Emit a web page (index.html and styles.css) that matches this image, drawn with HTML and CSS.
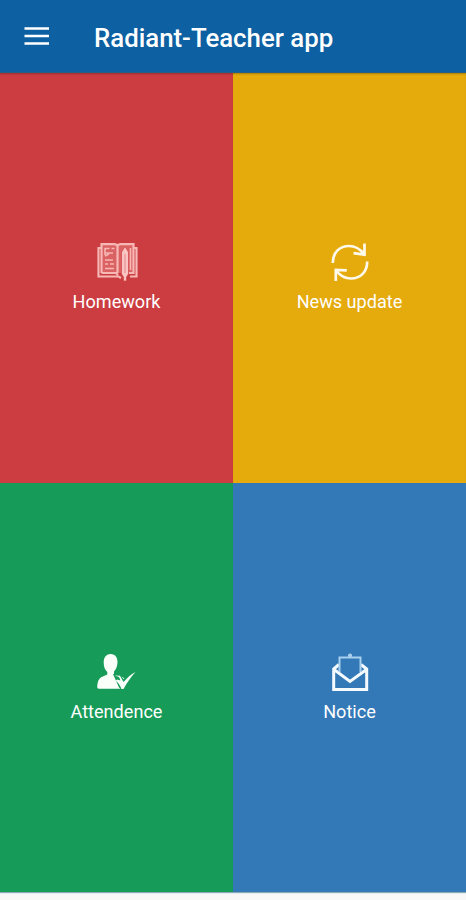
FILE: index.html
```html
<!DOCTYPE html>
<html lang="en">
<head>
<meta charset="utf-8">
<title>Radiant-Teacher app</title>
<link rel="stylesheet" href="styles.css">
</head>
<body>
<header class="bar">
  <svg class="menu" viewBox="0 0 26 20"><path d="M.5 2.400h24.500M.5 10h24.500M.5 17.500h24.500"/></svg>
  <h1 class="title">Radiant-Teacher app</h1>
</header>
<main class="tiles">
  <a class="tile homework">
    <svg class="icon" viewBox="0 0 60 55">
      <rect class="tint" x="14" y="9" width="33" height="29"/>
      <path class="soft" stroke-width="2.200" d="M14 13h-2.500v28.500h20L34 43M43 41.500h6.500V13H47M14.500 38V9.200H27q3 0 3.500 2q.5-2 3.500-2h12.500V38H42M14.500 38H29l2 2M30.500 11v27"/>
      <path class="soft" stroke-width="1.600" d="M17.500 13.500h5M24.500 13.500h3M18 18h8M18 21l4-2M18 25h8M18 29h3M23 29h4M18 33.500h9M18 13v7M43.500 13v22"/>
      <path class="pencil" d="M38 11.500l3.500 5.500v22l-2 3v4h-3v-4l-2-3V17z"/>
      <path class="lead" d="M38 19v19"/>
    </svg>
    <span class="label">Homework</span>
  </a>
  <a class="tile news">
    <svg class="icon" viewBox="0 0 60 55">
      <path class="line" stroke-width="2.700" d="M12.800 28C12.800 17 20 11 29 11c6.500 0 11.500 3.500 15 8M44.500 8.500v11.200l-11-1.500M47.200 26.500C47.200 37.500 40 43.500 31 43.500c-6.500 0-11.500-3.500-15-8M15.800 46V34.800l11 .5"/>
    </svg>
    <span class="label">News update</span>
  </a>
  <a class="tile attendance">
    <svg class="icon" viewBox="0 0 60 55">
      <path class="fill" d="M23.500 9c4.800 0 7.200 3.500 7 8.500c-.2 4-1.500 7-3.500 9v2.500l9 3.500q3 1 3 4v7.200H12c-1.500 0-2-1-1.700-3c.5-5 1.700-7.500 5-9l5-2.300v-2.500c-2.300-2-3.500-5-3.600-9C16.600 12.500 19 9 23.500 9z"/>
      <path class="cut" d="M26 29l6 0 4.500 5 9-7 4 2-13 18-4.500-4.500z"/>
      <path class="fill" d="M27.500 30.500l5.500.3 3.500 6.200c4-4.500 7-7.500 12-10c-4.500 5-8.500 10.500-12 17h-2c-1.500-4-3.500-7-6-8l1.500-1.500 3.500 1-1.500-3.500z"/>
    </svg>
    <span class="label">Attendence</span>
  </a>
  <a class="tile notice">
    <svg class="icon" viewBox="0 0 60 55">
      <path class="line" stroke-width="3" d="M19 19.500L13.700 24v20.500h33V24L41 19.500M14 24.500l16 12 16.500-12"/>
      <path class="sheet" stroke-width="2" d="M19.500 27V12.500h21V27M30 13V9"/>
      <circle class="sheet" stroke-width="1.200" cx="30" cy="10.500" r="1.500"/>
    </svg>
    <span class="label">Notice</span>
  </a>
</main>
</body>
</html>
```
FILE: styles.css
```css
* { box-sizing: border-box; }
body {
  margin: 0;
  height: 900px;
  overflow: hidden;
  background: #f8f8f8;
  color: #fff;
  font-family: Roboto, "Liberation Sans", sans-serif;
}
.bar {
  display: flex;
  align-items: center;
  height: 73px;
  padding: 0 24px;
  background: #0d60a2;
  border-bottom: 1px solid #285d86;
}
.menu {
  width: 26px;
  height: 20px;
  fill: none;
  stroke: #fff;
  stroke-width: 2.500;
}
.title {
  margin: 4px 0 0 44px;
  font-size: 25.800px;
  line-height: 32px;
  font-weight: 500;
  white-space: nowrap;
}
.tiles {
  display: grid;
  grid-template-columns: 233px 233px;
  grid-template-rows: 410px 409px;
  box-shadow: 0 1px 1px #8aabba;
}
.tile {
  display: flex;
  flex-direction: column;
  align-items: center;
  padding-top: 162px;
}
.homework { background: #cc3d41; }
.news { background: #e5aa0c; }
.attendance { background: #169b58; }
.notice { background: #3379b7; }
.homework, .news { box-shadow: inset 0 2px 2px -1px #0004; }
.icon {
  width: 60px;
  height: 55px;
  fill: none;
  stroke-linejoin: miter;
}
.label {
  margin-top: 1px;
  font-size: 18.100px;
  line-height: 22px;
  white-space: nowrap;
}
.line { stroke: #fff9ec; }
.notice .line { stroke: #f5faff; }
.sheet { stroke: #a9d0ee; }
.fill { fill: #fafffa; }
.cut { fill: #169b58; }
.soft { stroke: #f6b7b5; }
.tint { fill: #da6262; }
.pencil { fill: #f9c4c1; stroke: #d34b4e; stroke-width: .8; }
.lead { stroke: #e78986; stroke-width: 1; }
```
